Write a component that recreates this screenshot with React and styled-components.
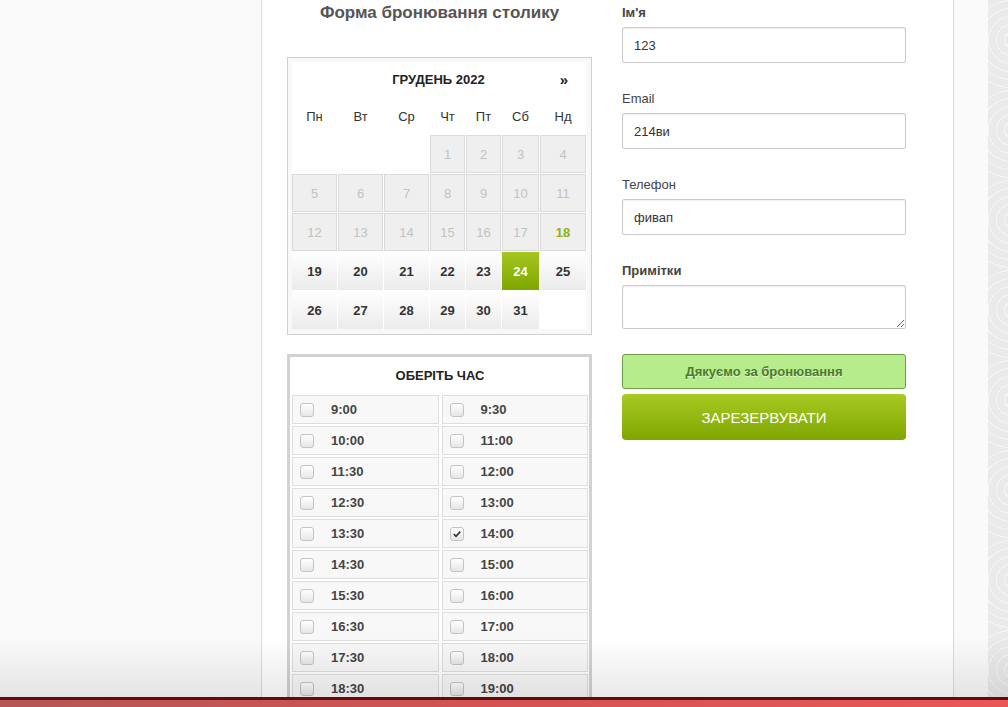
import React from "react";
import styled, { createGlobalStyle, css } from "styled-components";

const GlobalStyle = createGlobalStyle`
  html, body {
    margin: 0;
    padding: 0;
    overflow: hidden;
  }
  body {
    font-family: "Liberation Sans", Arial, sans-serif;
    color: #333;
  }
  * {
    box-sizing: border-box;
  }
`;

const Page = styled.div`
  display: flex;
  min-height: 100vh;
`;
const LeftGutter = styled.div`
  width: 262px;
  flex-shrink: 0;
  background: #fafafa;
  border-right: 1px solid #dcdcdc;
`;
const Main = styled.main`
  width: 691px;
  flex-shrink: 0;
  background: #fff;
  display: flex;
  gap: 30px;
  padding-left: 25px;
`;
const RightGutter = styled.div`
  width: 35px;
  flex-shrink: 0;
  background: #fafafa;
  border-left: 1px solid #dcdcdc;
`;
const Pattern = styled.div`
  flex: 1;
  background-color: #eaeaea;
  background-image: repeating-radial-gradient(
    circle at 24px 40px,
    transparent 0 7px,
    rgba(255, 255, 255, 0.5) 7px 8px
  );
  background-size: 40px 90px;
`;

const LeftColumn = styled.section`
  width: 305px;
  flex-shrink: 0;
  padding-top: 3px;
`;
const Title = styled.h2`
  margin: 0 0 34px;
  font-size: 17px;
  line-height: 20px;
  font-weight: bold;
  color: #555;
  text-align: center;
`;

const Calendar = styled.div`
  border: 1px solid #cfcfcf;
  background: #f8f8f8;
  padding: 4px 4px 5px;
`;
const CalendarInner = styled.div`
  background: #fff;
`;
const cols = "45px 45px 45px 35px 35px 37px 46px";
const CalHeader = styled.div`
  display: grid;
  grid-template-columns: ${cols};
  column-gap: 1px;
  height: 35px;
  align-items: center;
  font-size: 13px;
  font-weight: bold;
  color: #222;
`;
const MonthTitle = styled.div`
  grid-column: 2 / 7;
  text-align: center;
`;
const NextArrow = styled.div`
  text-align: center;
  font-size: 15px;
  padding-left: 2px;
`;
const WeekRow = styled.div`
  display: grid;
  grid-template-columns: ${cols};
  column-gap: 1px;
  height: 38px;
  align-items: center;
  font-size: 13px;
  color: #333;
  text-align: center;
`;
const DaysGrid = styled.div`
  display: grid;
  grid-template-columns: ${cols};
  grid-auto-rows: 38px;
  gap: 1px;
`;
const Day = styled.div`
  display: flex;
  align-items: center;
  justify-content: center;
  font-size: 13px;
  ${(p) =>
    p.$kind === "past" &&
    css`
      background: #efefef;
      border: 1px solid #dadada;
      color: #c2c2c2;
    `}
  ${(p) =>
    p.$kind === "today" &&
    css`
      background: #efefef;
      border: 1px solid #dadada;
      color: #8cb412;
      font-weight: bold;
    `}
  ${(p) =>
    p.$kind === "open" &&
    css`
      background: linear-gradient(#ffffff, #ebebeb);
      color: #333;
      font-weight: bold;
    `}
  ${(p) =>
    p.$kind === "selected" &&
    css`
      background: linear-gradient(#a6c620, #7fa600);
      color: #fff;
      font-weight: bold;
    `}
`;

const TimeBox = styled.div`
  margin-top: 19px;
  border: 3px solid #d2d2d2;
  background: #fff;
  padding: 0 1px 2px 2px;
`;
const TimeTitle = styled.div`
  height: 36px;
  margin-bottom: 2px;
  display: flex;
  align-items: center;
  justify-content: center;
  font-size: 13px;
  font-weight: bold;
  color: #222;
`;
const SlotGrid = styled.div`
  display: grid;
  grid-template-columns: 1fr 1fr;
  grid-auto-rows: 29px;
  column-gap: 3px;
  row-gap: 2px;
`;
const Slot = styled.label`
  display: flex;
  align-items: center;
  gap: 17px;
  padding-left: 7px;
  background: #f8f8f8;
  border: 1px solid #dedede;
  font-size: 13px;
  font-weight: bold;
  color: #444;
`;
const Check = styled.span`
  width: 14px;
  height: 14px;
  border: 1px solid #c4c4c4;
  border-radius: 3px;
  background: linear-gradient(#ffffff, #e6e6e6);
  display: flex;
  align-items: center;
  justify-content: center;
`;

const RightColumn = styled.section`
  width: 284px;
  flex-shrink: 0;
  padding-top: 5px;
`;
const Field = styled.div`
  margin-bottom: 28px;
`;
const Label = styled.div`
  font-size: 13px;
  line-height: 16px;
  margin-bottom: 6px;
  color: #444;
  font-weight: ${(p) => (p.$bold ? "bold" : "normal")};
`;
const fieldStyle = css`
  display: block;
  width: 100%;
  border: 1px solid #cacaca;
  border-radius: 2px;
  box-shadow: inset 0 1px 2px rgba(0, 0, 0, 0.07);
  font-family: "Liberation Sans", Arial, sans-serif;
  font-size: 13px;
  color: #333;
  background: #fff;
  outline: none;
`;
const Input = styled.input`
  ${fieldStyle}
  height: 36px;
  padding: 0 11px;
`;
const TextArea = styled.textarea`
  ${fieldStyle}
  height: 44px;
  padding: 6px 11px;
`;
const Success = styled.div`
  margin-top: -3px;
  height: 35px;
  display: flex;
  align-items: center;
  justify-content: center;
  background: #b7ec8d;
  border: 1px solid #6c9e46;
  border-radius: 3px;
  font-size: 13px;
  font-weight: bold;
  color: #4b7a2b;
  text-shadow: 0 1px 0 rgba(255, 255, 255, 0.6);
`;
const Submit = styled.button`
  margin-top: 5px;
  width: 100%;
  height: 46px;
  border: none;
  border-radius: 4px;
  background: linear-gradient(#a8ca22, #7fa600);
  color: #fff;
  font-family: "Liberation Sans", Arial, sans-serif;
  font-size: 15px;
  text-transform: uppercase;
  cursor: pointer;
`;

const BottomFade = styled.div`
  position: fixed;
  left: 0;
  right: 0;
  bottom: 10px;
  height: 60px;
  background: linear-gradient(rgba(0, 0, 0, 0), rgba(0, 0, 0, 0.085));
  pointer-events: none;
`;
const FooterBar = styled.div`
  position: fixed;
  left: 0;
  right: 0;
  bottom: 0;
  height: 10px;
  border-top: 3px solid #650b0b;
  background: linear-gradient(90deg, #b45656, #d45353 50%, #e95757);
`;

const weekDays = ["Пн", "Вт", "Ср", "Чт", "Пт", "Сб", "Нд"];

const days = [
  ...Array(3).fill(null),
  ...Array.from({ length: 31 }, (_, i) => i + 1),
];

const dayKind = (d) => {
  if (d < 18) return "past";
  if (d === 18) return "today";
  if (d === 24) return "selected";
  return "open";
};

const times = [
  ["9:00", "9:30"],
  ["10:00", "11:00"],
  ["11:30", "12:00"],
  ["12:30", "13:00"],
  ["13:30", "14:00"],
  ["14:30", "15:00"],
  ["15:30", "16:00"],
  ["16:30", "17:00"],
  ["17:30", "18:00"],
  ["18:30", "19:00"],
  ["19:30", "20:00"],
  ["20:30", "21:00"],
];

const CheckMark = () => (
  <svg width="10" height="10" viewBox="0 0 10 10">
    <path d="M1.8 5.2 L4 7.3 L8.3 2.6" fill="none" stroke="#333" strokeWidth="1.6" />
  </svg>
);

const App = () => {
  return (
    <>
      <GlobalStyle />
      <Page>
        <LeftGutter />
        <Main>
          <LeftColumn>
            <Title>Форма бронювання столику</Title>
            <Calendar>
              <CalendarInner>
                <CalHeader>
                  <MonthTitle>ГРУДЕНЬ 2022</MonthTitle>
                  <NextArrow>»</NextArrow>
                </CalHeader>
                <WeekRow>
                  {weekDays.map((w) => (
                    <div key={w}>{w}</div>
                  ))}
                </WeekRow>
                <DaysGrid>
                  {days.map((d, i) =>
                    d ? (
                      <Day key={i} $kind={dayKind(d)}>
                        {d}
                      </Day>
                    ) : (
                      <div key={i} />
                    )
                  )}
                </DaysGrid>
              </CalendarInner>
            </Calendar>
            <TimeBox>
              <TimeTitle>ОБЕРІТЬ ЧАС</TimeTitle>
              <SlotGrid>
                {times.flat().map((t) => (
                  <Slot key={t}>
                    <Check>{t === "14:00" && <CheckMark />}</Check>
                    {t}
                  </Slot>
                ))}
              </SlotGrid>
            </TimeBox>
          </LeftColumn>
          <RightColumn>
            <Field>
              <Label $bold>Ім'я</Label>
              <Input defaultValue="123" />
            </Field>
            <Field>
              <Label>Email</Label>
              <Input defaultValue="214ви" />
            </Field>
            <Field>
              <Label>Телефон</Label>
              <Input defaultValue="фивап" />
            </Field>
            <Field>
              <Label $bold>Примітки</Label>
              <TextArea />
            </Field>
            <Success>Дякуємо за бронювання</Success>
            <Submit>Зарезервувати</Submit>
          </RightColumn>
        </Main>
        <RightGutter />
        <Pattern />
      </Page>
      <BottomFade />
      <FooterBar />
    </>
  );
};

export default App;
